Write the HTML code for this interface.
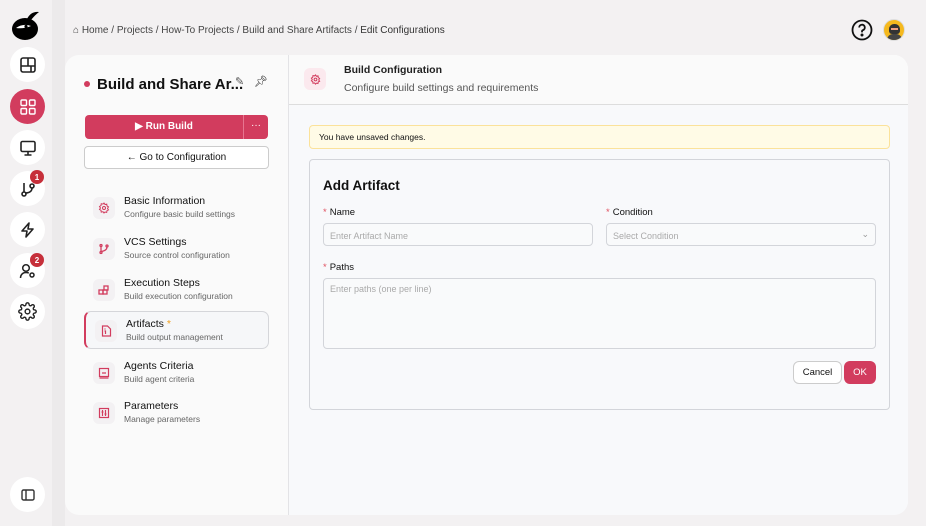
<!DOCTYPE html>
<html><head><meta charset="utf-8"><style>
*{box-sizing:border-box;margin:0;padding:0}
body{width:926px;height:526px;background:#f3f1f2;font-family:"Liberation Sans",sans-serif;position:relative;overflow:hidden;color:#111}
.a{position:absolute}
.side{left:0;top:0;width:52px;height:526px;background:#f3f1f2}
.strip{left:52px;top:0;width:13px;height:526px;background:#eceaeb}
.ic{position:absolute;left:10px;width:35px;height:35px;border-radius:50%;background:#fff;display:flex;align-items:center;justify-content:center}
.badge{position:absolute;left:30px;width:14px;height:14px;border-radius:50%;background:#c62f3a;color:#fff;font-size:8px;font-weight:bold;display:flex;align-items:center;justify-content:center}
.card{left:65px;top:55px;width:843px;height:460px;background:#fafafa;border-radius:14px;overflow:hidden}
.right{left:223px;top:0;width:620px;height:460px;background:#f8f9fb;border-left:1px solid #e3e3e6}
.nav{position:absolute;left:19px;width:184px;height:38px}
.nav .ni{position:absolute;left:9px;top:6px;width:22px;height:22px;border-radius:6px;background:#f3f1f3;display:flex;align-items:center;justify-content:center}
.nav .t{position:absolute;left:40px;top:4px;font-size:10.5px;color:#111}
.nav .s{position:absolute;left:40px;top:18px;font-size:8.5px;color:#666}
.inp{position:absolute;border:1px solid #d3d5da;border-radius:4px;background:#f9fafb;font-size:9px;color:#aaa;padding:7px 6px}
.lbl{position:absolute;font-size:9.5px;color:#111}
.lbl b{color:#e0505f;font-weight:normal;margin-right:3px}
</style></head><body>
<div class="a side"></div><div class="a strip"></div>
<svg class="a" style="left:11px;top:9px" width="30" height="32" viewBox="0 0 30 32"><ellipse cx="14" cy="20" rx="13" ry="11" fill="#000"/><path d="M16 10 Q20 2 28 3 Q24 6 20 11Z" fill="#000"/><path d="M5 19 Q12 14 20 17 Q13 20 5 19Z" fill="#fff"/><circle cx="15" cy="17.5" r="1.6" fill="#000"/></svg>
<div class="ic" style="top:47px"><svg width="18" height="18" viewBox="0 0 18 18" fill="none" stroke="#222" stroke-width="1.6"><rect x="2" y="2" width="14" height="14" rx="2"/><path d="M2 10h14M9 2v8M12 10v6"/></svg></div>
<div class="ic" style="top:89px;background:#d23c5e"><svg width="18" height="18" viewBox="0 0 18 18" fill="none" stroke="#fff" stroke-width="1.4"><rect x="2" y="2" width="5.5" height="5.5" rx="1"/><rect x="10.5" y="2" width="5.5" height="5.5" rx="1"/><rect x="2" y="10.5" width="5.5" height="5.5" rx="1"/><rect x="10.5" y="10.5" width="5.5" height="5.5" rx="1"/></svg></div>
<div class="ic" style="top:130px"><svg width="18" height="18" viewBox="0 0 18 18" fill="none" stroke="#222" stroke-width="1.6"><rect x="2" y="2.5" width="14" height="10" rx="1.5"/><path d="M9 12.5v3M5.5 16h7"/></svg></div>
<div class="ic" style="top:171px"><svg width="18" height="18" viewBox="0 0 18 18" fill="none" stroke="#222" stroke-width="1.6"><circle cx="5" cy="14" r="2"/><circle cx="13" cy="6" r="2"/><path d="M5 3v9M13 8c0 4-4 5-7 5"/></svg></div>
<div class="badge" style="top:170px">1</div>
<div class="ic" style="top:212px"><svg width="18" height="18" viewBox="0 0 18 18" fill="none" stroke="#222" stroke-width="1.6" stroke-linejoin="round"><path d="M10 2 3 10h5l-1 6 7-8H9z"/></svg></div>
<div class="ic" style="top:253px"><svg width="18" height="18" viewBox="0 0 18 18" fill="none" stroke="#222" stroke-width="1.5"><circle cx="7" cy="6" r="3.3"/><path d="M1.5 16c0-3.5 2.5-5.5 5.5-5.5 1.3 0 2 .2 2.8.6"/><circle cx="13" cy="13" r="2"/></svg></div>
<div class="badge" style="top:253px">2</div>
<div class="ic" style="top:294px"><svg width="19" height="19" viewBox="0 0 24 24" fill="none" stroke="#222" stroke-width="1.8"><circle cx="12" cy="12" r="3"/><path d="M19.4 15a1.7 1.7 0 0 0 .3 1.8l.1.1a2 2 0 1 1-2.8 2.8l-.1-.1a1.7 1.7 0 0 0-2.9 1.2V21a2 2 0 1 1-4 0v-.1a1.7 1.7 0 0 0-2.900-1.2l-.1.1a2 2 0 1 1-2.8-2.8l.1-.1A1.7 1.7 0 0 0 3.1 14H3a2 2 0 1 1 0-4h.1a1.7 1.7 0 0 0 1.2-2.9l-.1-.1a2 2 0 1 1 2.8-2.8l.1.1A1.7 1.7 0 0 0 10 3.1V3a2 2 0 1 1 4 0v.1a1.7 1.7 0 0 0 2.9 1.2l.1-.1a2 2 0 1 1 2.8 2.8l-.1.1a1.7 1.7 0 0 0 1.2 2.9H21a2 2 0 1 1 0 4h-.1a1.7 1.7 0 0 0-1.5 1z"/></svg></div>
<div class="ic" style="top:477px"><svg width="14" height="12" viewBox="0 0 14 12" fill="none" stroke="#333" stroke-width="1.4"><rect x="1" y="1" width="12" height="10" rx="1.5"/><path d="M5 1v10"/></svg></div>

<div class="a" style="left:73px;top:25px;font-size:10px;color:#444">⌂ Home / Projects / How-To Projects / Build and Share Artifacts / <span style="color:#333">Edit Configurations</span></div>
<svg class="a" style="left:851px;top:19px" width="22" height="22" viewBox="0 0 22 22" fill="none" stroke="#111" stroke-width="1.8"><circle cx="11" cy="11" r="9.5"/><path d="M8.2 8.5a2.8 2.8 0 1 1 3.8 2.6c-.7.3-1 .8-1 1.5v.8"/><circle cx="11" cy="16" r=".6" fill="#111"/></svg>
<div class="a" style="left:883px;top:19px;width:22px;height:22px;border-radius:50%;background:#f5b91e;overflow:hidden;border:1px solid #ddd"><div style="position:absolute;left:5px;top:4px;width:11px;height:10px;border-radius:5px 5px 3px 3px;background:#333"></div><div style="position:absolute;left:7px;top:8px;width:7px;height:2px;background:#f0a080"></div><div style="position:absolute;left:3px;top:14px;width:15px;height:9px;border-radius:6px 6px 0 0;background:#444"></div></div>

<div class="a card">
  <div class="a" style="left:19px;top:26px;width:6px;height:6px;border-radius:50%;background:#d23c5e"></div>
  <div class="a" style="left:32px;top:21px;font-size:15px;font-weight:bold">Build and Share Ar...</div>
  <div class="a" style="left:170px;top:20px;font-size:11px;color:#555">✎</div>
  <div class="a" style="left:189px;top:20px;font-size:11px">📌︎</div>
  <div class="a" style="left:20px;top:60px;width:183px;height:24px;border-radius:4px;background:#d23c5e;color:#fff;font-size:10px;font-weight:bold">
    <div class="a" style="left:0;top:0;width:158px;text-align:center;line-height:24px">▶ Run Build</div>
    <div class="a" style="left:158px;top:0;width:1px;height:24px;background:#e77590"></div>
    <div class="a" style="left:159px;top:0;width:24px;text-align:center;font-weight:normal;line-height:22px">···</div>
  </div>
  <div class="a" style="left:19px;top:91px;width:185px;height:23px;border:1px solid #ccc;border-radius:4px;background:#fff;font-size:10px;text-align:center;line-height:21px">← Go to Configuration</div>

  <div class="nav" style="top:136px"><div class="ni"><svg width="12" height="12" viewBox="0 0 24 24" fill="none" stroke="#d23c5e" stroke-width="2"><circle cx="12" cy="12" r="3"/><path d="M12 2l2 3 3.5-.8.5 3.6 3 2-2 3 2 3-3 1.4-.6 3.6-3.4-.8L12 22l-2-2.6-3.5.8-.5-3.6-3-1.6 2-3-2-3 3-2 .5-3.6 3.5.8z"/></svg></div><div class="t">Basic Information</div><div class="s">Configure basic build settings</div></div>
  <div class="nav" style="top:177px"><div class="ni"><svg width="12" height="12" viewBox="0 0 12 12" fill="none" stroke="#d23c5e" stroke-width="1.3"><circle cx="3" cy="2.5" r="1"/><circle cx="3" cy="9.5" r="1"/><circle cx="9" cy="3" r="1"/><path d="M3 3.5v5M9 4c0 3-3 4-5.5 4.5"/></svg></div><div class="t">VCS Settings</div><div class="s">Source control configuration</div></div>
  <div class="nav" style="top:218px"><div class="ni"><svg width="12" height="12" viewBox="0 0 12 12" fill="none" stroke="#d23c5e" stroke-width="1.3"><rect x="1" y="6" width="4" height="4"/><rect x="5" y="6" width="4" height="4"/><rect x="6" y="2" width="4" height="4"/></svg></div><div class="t">Execution Steps</div><div class="s">Build execution configuration</div></div>
  <div class="a" style="left:19px;top:256px;width:185px;height:38px;border:1px solid #d5d6da;border-left:2px solid #d23c5e;border-radius:7px;background:#f6f7f9"></div>
  <div class="nav" style="top:259px;left:21px"><div class="ni"><svg width="11" height="12" viewBox="0 0 11 12" fill="none" stroke="#d23c5e" stroke-width="1.2"><path d="M1.5 1h5l3 3v7h-8z"/><path d="M3.5 4h1M3.5 6h1v3"/></svg></div><div class="t">Artifacts <span style="color:#f0a020">*</span></div><div class="s">Build output management</div></div>
  <div class="nav" style="top:301px"><div class="ni"><svg width="12" height="12" viewBox="0 0 12 12" fill="none" stroke="#d23c5e" stroke-width="1.2"><rect x="1.5" y="1.5" width="9" height="8"/><path d="M1.5 11h9M4 6h4"/></svg></div><div class="t">Agents Criteria</div><div class="s">Build agent criteria</div></div>
  <div class="nav" style="top:341px"><div class="ni"><svg width="12" height="12" viewBox="0 0 12 12" fill="none" stroke="#d23c5e" stroke-width="1.2"><rect x="1.5" y="1.5" width="9" height="9"/><path d="M4.5 3v6M7.5 3v6M3.5 5h2M6.5 7h2"/></svg></div><div class="t">Parameters</div><div class="s">Manage parameters</div></div>

  <div class="a right">
    <div class="a" style="left:0;top:0;width:620px;height:50px;background:#fafafa;border-bottom:1px solid #ddd"></div>
    <div class="a" style="left:15px;top:13px;width:22px;height:22px;border-radius:6px;background:#fbe9ee;display:flex;align-items:center;justify-content:center"><svg width="11" height="11" viewBox="0 0 24 24" fill="none" stroke="#d23c5e" stroke-width="2.2"><circle cx="12" cy="12" r="3"/><path d="M12 2l2 3 3.5-.8.5 3.6 3 2-2 3 2 3-3 1.4-.6 3.6-3.4-.8L12 22l-2-2.6-3.5.8-.5-3.6-3-1.6 2-3-2-3 3-2 .5-3.6 3.5.8z"/></svg></div>
    <div class="a" style="left:55px;top:9px;font-size:10.5px;font-weight:bold;color:#222">Build Configuration</div>
    <div class="a" style="left:55px;top:27px;font-size:10.5px;color:#555">Configure build settings and requirements</div>
    <div class="a" style="left:20px;top:70px;width:581px;height:24px;background:#fffbe6;border:1px solid #fbe29a;border-radius:4px;font-size:8.5px;padding:6px 9px">You have unsaved changes.</div>
    <div class="a" style="left:20px;top:104px;width:581px;height:251px;border:1px solid #d3d5da;border-radius:4px;background:#f8f9fb">
      <div class="a" style="left:13px;top:18px;font-size:13.5px;font-weight:bold;color:#111">Add Artifact</div>
      <div class="lbl" style="left:13px;top:47px"><b>*</b>Name</div>
      <div class="lbl" style="left:296px;top:47px"><b>*</b>Condition</div>
      <div class="inp" style="left:13px;top:63px;width:270px;height:23px">Enter Artifact Name</div>
      <div class="inp" style="left:296px;top:63px;width:270px;height:23px">Select Condition<span style="position:absolute;right:6px;top:5px;color:#999">⌄</span></div>
      <div class="lbl" style="left:13px;top:102px"><b>*</b>Paths</div>
      <div class="inp" style="left:13px;top:118px;width:553px;height:71px;padding:5px 6px">Enter paths (one per line)</div>
      <div class="a" style="left:483px;top:201px;width:49px;height:23px;border:1px solid #ccc;border-radius:6px;background:#fff;font-size:9.5px;text-align:center;line-height:21px">Cancel</div>
      <div class="a" style="left:534px;top:201px;width:32px;height:23px;border-radius:6px;background:#d23c5e;color:#fff;font-size:9.5px;text-align:center;line-height:23px">OK</div>
    </div>
  </div>
</div>
</body></html>
